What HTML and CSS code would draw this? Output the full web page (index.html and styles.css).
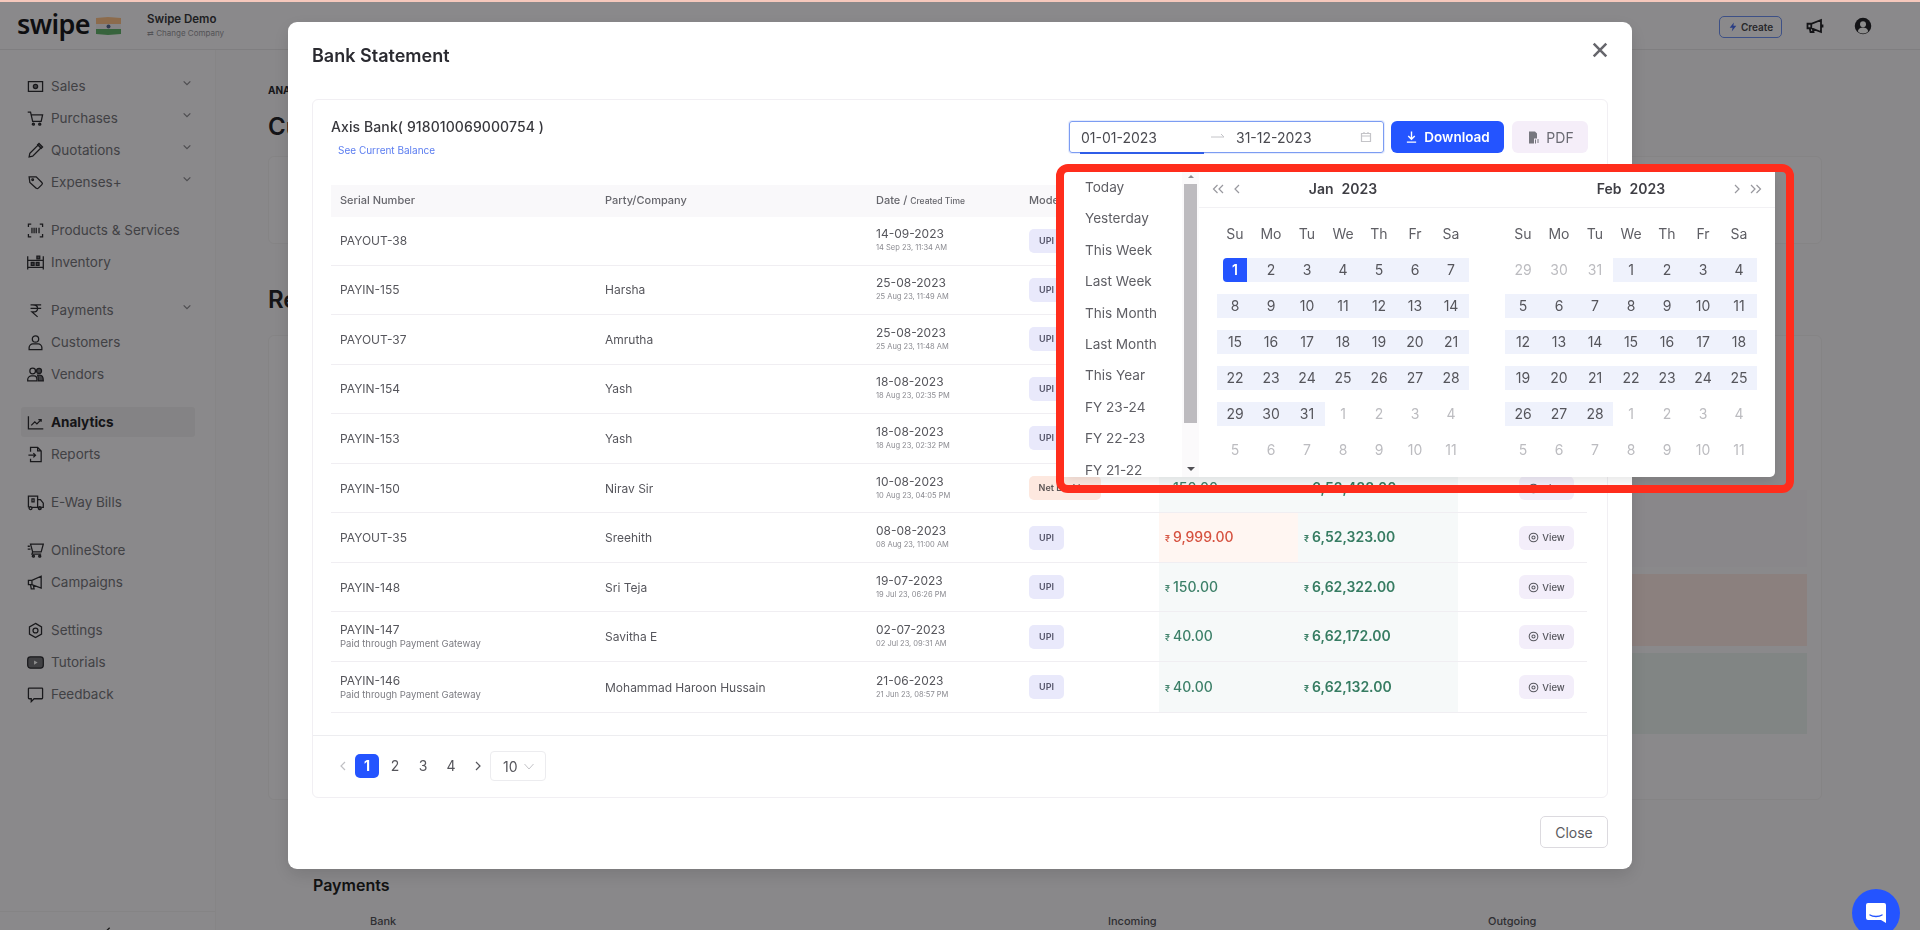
FILE: index.html
```html
<!DOCTYPE html>
<html lang="en">
<head>
<meta charset="utf-8">
<title>Swipe - Bank Statement</title>
<link rel="stylesheet" href="styles.css">
</head>
<body>
<div class="strip"></div>
<div class="app">
  <header class="topbar">
    <div class="brand">
      <span class="logo">swipe</span>
      <svg class="flag" viewBox="0 0 25 18"><path fill="#ffc48a" d="M0 1l12-1 13 1v6H0z"/><path fill="#f4f0f4" d="M0 7h25v5H0z"/><path fill="#64b56d" d="M0 12h25v5l-13 1-12-1z"/><circle cx="12.500" cy="9.500" r="2" fill="#5a6a90"/></svg>
    </div>
    <div class="company">
      <strong>Swipe Demo</strong>
      <small>⇄ Change Company</small>
    </div>
    <div class="top-actions">
      <button class="create"><svg viewBox="0 0 24 24"><path fill="currentColor" d="M14 1L4 14h7l-2 9 11-14h-7z"/></svg>Create</button>
      <svg class="top-icon" viewBox="0 0 24 24" fill="none" stroke="currentColor" stroke-width="2.400"><path d="M2 9v6h5l13 5V4L7 9zM7 9v6M5 15l1 5h4l-1-4M22 10v4"/></svg>
      <svg class="top-icon user" viewBox="0 0 24 24"><circle cx="12" cy="12" r="11" fill="currentColor"/><circle cx="12" cy="9.500" r="4" fill="#fff"/><path fill="#fff" d="M5 19c1-4 4-5 7-5s6 1 7 5c-2 2-4 3-7 3s-5-1-7-3z"/></svg>
    </div>
  </header>
  <div class="shell">
    <aside class="sidebar">
      <nav class="nav">
        <div class="group">
          <a class="item"><svg class="ic" viewBox="0 0 24 24"><path d="M5 5H2v14h3M19 5h3v14h-3M5 5h14M5 19h14"/><circle cx="12" cy="12" r="3" fill="currentColor"/></svg>Sales<svg class="chev" viewBox="0 0 12 12"><path d="M2 4l4 4 4-4"/></svg></a>
          <a class="item"><svg class="ic" viewBox="0 0 24 24"><path d="M1 3h4l3 13h12l2-9H6"/><circle cx="9" cy="20" r="1.500" fill="currentColor"/><circle cx="18" cy="20" r="1.500" fill="currentColor"/></svg>Purchases<svg class="chev" viewBox="0 0 12 12"><path d="M2 4l4 4 4-4"/></svg></a>
          <a class="item"><svg class="ic" viewBox="0 0 24 24"><path d="M3 21l1-5L16 4l4 4L8 20z"/><path fill="currentColor" d="M17 2l5 5-2 2-5-5z"/></svg>Quotations<svg class="chev" viewBox="0 0 12 12"><path d="M2 4l4 4 4-4"/></svg></a>
          <a class="item"><svg class="ic" viewBox="0 0 24 24"><path d="M3 4h10l8 8c1 1 1 2 0 3l-5 5c-1 1-2 1-3 0L4 12z"/><circle cx="8" cy="8" r="1.200"/></svg>Expenses+<svg class="chev" viewBox="0 0 12 12"><path d="M2 4l4 4 4-4"/></svg></a>
        </div>
        <div class="group">
          <a class="item"><svg class="ic" viewBox="0 0 24 24"><path d="M2 7V3h4M18 3h4v4M22 17v4h-4M6 21H2v-4M7 8v8M10 8v8M13 8v8M17 8v8"/></svg>Products &amp; Services</a>
          <a class="item"><svg class="ic" viewBox="0 0 24 24"><path d="M1 3v19M23 3v19M1 9h22M1 19h22"/><path fill="currentColor" d="M6 12h4v4H6zM13 12h4v4h-4zM14 3h4v4h-4z"/></svg>Inventory</a>
        </div>
        <div class="group">
          <a class="item"><svg class="ic" viewBox="0 0 24 24"><path d="M5 4h15M5 9h15M8 4c5 0 7 2 7 5s-3 5-7 5h-1l8 7"/></svg>Payments<svg class="chev" viewBox="0 0 12 12"><path d="M2 4l4 4 4-4"/></svg></a>
          <a class="item"><svg class="ic" viewBox="0 0 24 24"><circle cx="12" cy="7" r="4.500"/><path d="M3 22v-3c0-3 3-5 5-5h8c2 0 5 2 5 5v3z"/></svg>Customers</a>
          <a class="item"><svg class="ic" viewBox="0 0 24 24"><circle cx="8" cy="7" r="4"/><circle cx="17" cy="7" r="3.500" fill="currentColor"/><path d="M1 21v-2c0-3 3-5 5-5h4c2 0 4 2 4 5v2z"/><path fill="currentColor" d="M15 13h3c3 0 5 3 5 8h-7c0-3 0-6-1-8z"/></svg>Vendors</a>
        </div>
        <div class="group">
          <a class="item active"><svg class="ic" viewBox="0 0 24 24"><path d="M2 3v18h21M6 16l5-5 3 3 6-6M16 8h4v3"/></svg>Analytics</a>
          <a class="item"><svg class="ic" viewBox="0 0 24 24"><path d="M5 8V2h10l5 5v15H5v-4M15 2v5h5M2 13h10M9 10l3 3-3 3"/></svg>Reports</a>
        </div>
        <div class="group">
          <a class="item"><svg class="ic" viewBox="0 0 24 24"><path d="M2 19V3h13v16M15 8h4l4 5v6h-3M7 19h9"/><circle cx="5" cy="20" r="2"/><circle cx="18" cy="20" r="2" fill="currentColor"/><path d="M7 7h3v4H7z"/></svg>E-Way Bills</a>
        </div>
        <div class="group">
          <a class="item"><svg class="ic" viewBox="0 0 24 24"><path d="M5 3h18l-3 11H8L5 3zM1 6h3M1 10h4"/><circle cx="9" cy="20" r="1.500" fill="currentColor"/><circle cx="18" cy="20" r="1.500" fill="currentColor"/><path d="M8 14l-1 3h13"/></svg>OnlineStore</a>
          <a class="item"><svg class="ic" viewBox="0 0 24 24"><path d="M2 9v6h5l13 5V3L7 9zM7 9v6M5 15l1 6h4l-1-5"/></svg>Campaigns</a>
        </div>
        <div class="group">
          <a class="item"><svg class="ic" viewBox="0 0 24 24"><path d="M12 2l8.500 5v10L12 22l-8.500-5V7z"/><circle cx="12" cy="12" r="3.500"/></svg>Settings</a>
          <a class="item"><svg class="ic" viewBox="0 0 24 24"><rect x="1" y="4" width="22" height="16" rx="4" fill="currentColor"/><path fill="#fff" stroke="none" d="M10 9l5 3-5 3z"/></svg>Tutorials</a>
          <a class="item"><svg class="ic" viewBox="0 0 24 24"><path d="M3 3h18a1 1 0 011 1v13a1 1 0 01-1 1H10l-4 4v-4H3a1 1 0 01-1-1V4a1 1 0 011-1z"/></svg>Feedback</a>
        </div>
      </nav>
      <div class="side-foot"><svg viewBox="0 0 12 12"><path d="M8 2L4 6l4 4"/></svg></div>
    </aside>
    <main class="main">
      <div class="crumb">ANA</div>
      <h1 class="main-title">Cu</h1>
      <section class="bg-card summary">
        <span class="sum-label">D</span>
        <span class="sum-value">₹</span>
      </section>
      <h2 class="main-title second">Re</h2>
      <section class="bg-card bands">
        <div class="band b1"></div>
        <div class="band b2"></div>
        <div class="band b3"></div>
      </section>
      <section class="pay">
        <h3 class="pay-title">Payments</h3>
        <div class="pay-head"><span class="ph-bank">Bank</span><span class="ph-in">Incoming</span><span class="ph-out">Outgoing</span></div>
      </section>
    </main>
  </div>
</div>

<div class="mask"></div>

<div class="modal">
  <div class="modal-head">
    <h2 class="modal-title">Bank Statement</h2>
    <svg class="modal-x" viewBox="0 0 14 14"><path d="M1.500 1.500l11 11M12.500 1.500l-11 11"/></svg>
  </div>
  <div class="stmt">
    <div class="toolbar">
      <div class="acct">
        <div class="acct-name">Axis Bank( 918010069000754 )</div>
        <a class="acct-link">See Current Balance</a>
      </div>
      <div class="range">
        <span class="range-a">01-01-2023</span>
        <svg class="range-arrow" viewBox="0 0 14 8"><path d="M0 4h13M10 1l3 3"/></svg>
        <span class="range-b">31-12-2023</span>
        <svg class="range-cal" viewBox="0 0 12 12"><path d="M1.500 2.500h9v8h-9zM1.500 5h9M4 1v2M8 1v2"/></svg>
        <i class="range-bar"></i>
      </div>
      <button class="btn-dl"><svg viewBox="0 0 14 14"><path d="M7 1v8M3.500 6L7 9.500 10.500 6M2 12.500h10"/></svg>Download</button>
      <button class="btn-pdf"><svg viewBox="0 0 14 14"><path fill="currentColor" d="M3 1h6l2 2v5H8v5H3z"/><path fill="currentColor" d="M9 9h1v4H9zM11 9h2v1h-2zM11 11h2v1h-2z"/></svg>PDF</button>
    </div>

    <table class="tbl">
      <colgroup><col class="c1"><col class="c2"><col class="c3"><col class="c4"><col class="c5"><col class="c6"><col class="c7"></colgroup>
      <thead>
        <tr><th>Serial Number</th><th>Party/Company</th><th>Date / <small>Created Time</small></th><th>Mode</th><th></th><th></th><th></th></tr>
      </thead>
      <tbody>
        <tr><td>PAYOUT-38</td><td></td><td><div>14-09-2023</div><small>14 Sep 23, 11:34 AM</small></td><td><span class="tag">UPI</span></td><td class="num"></td><td class="num"></td><td class="act"></td></tr>
        <tr><td>PAYIN-155</td><td>Harsha</td><td><div>25-08-2023</div><small>25 Aug 23, 11:49 AM</small></td><td><span class="tag">UPI</span></td><td class="num"></td><td class="num"></td><td class="act"></td></tr>
        <tr><td>PAYOUT-37</td><td>Amrutha</td><td><div>25-08-2023</div><small>25 Aug 23, 11:48 AM</small></td><td><span class="tag">UPI</span></td><td class="num"></td><td class="num"></td><td class="act"></td></tr>
        <tr><td>PAYIN-154</td><td>Yash</td><td><div>18-08-2023</div><small>18 Aug 23, 02:35 PM</small></td><td><span class="tag">UPI</span></td><td class="num"></td><td class="num"></td><td class="act"></td></tr>
        <tr><td>PAYIN-153</td><td>Yash</td><td><div>18-08-2023</div><small>18 Aug 23, 02:32 PM</small></td><td><span class="tag">UPI</span></td><td class="num"></td><td class="num"></td><td class="act"></td></tr>
        <tr><td>PAYIN-150</td><td>Nirav Sir</td><td><div>10-08-2023</div><small>10 Aug 23, 04:05 PM</small></td><td><span class="tag net">Net Banking</span></td><td class="num"><span class="amt in"><i>₹</i>150.00</span></td><td class="num"><span class="amt bal"><i>₹</i>6,52,488.00</span></td><td class="act"><span class="view"><svg viewBox="0 0 14 14"><circle cx="7" cy="7" r="5.500"/><circle cx="7" cy="7" r="2"/></svg>View</span></td></tr>
        <tr><td>PAYOUT-35</td><td>Sreehith</td><td><div>08-08-2023</div><small>08 Aug 23, 11:00 AM</small></td><td><span class="tag">UPI</span></td><td class="num out"><span class="amt red"><i>₹</i>9,999.00</span></td><td class="num"><span class="amt bal"><i>₹</i>6,52,323.00</span></td><td class="act"><span class="view"><svg viewBox="0 0 14 14"><circle cx="7" cy="7" r="5.500"/><circle cx="7" cy="7" r="2"/></svg>View</span></td></tr>
        <tr><td>PAYIN-148</td><td>Sri Teja</td><td><div>19-07-2023</div><small>19 Jul 23, 06:26 PM</small></td><td><span class="tag">UPI</span></td><td class="num"><span class="amt in"><i>₹</i>150.00</span></td><td class="num"><span class="amt bal"><i>₹</i>6,62,322.00</span></td><td class="act"><span class="view"><svg viewBox="0 0 14 14"><circle cx="7" cy="7" r="5.500"/><circle cx="7" cy="7" r="2"/></svg>View</span></td></tr>
        <tr><td><div>PAYIN-147</div><small class="paid">Paid through Payment Gateway</small></td><td>Savitha E</td><td><div>02-07-2023</div><small>02 Jul 23, 09:31 AM</small></td><td><span class="tag">UPI</span></td><td class="num"><span class="amt in"><i>₹</i>40.00</span></td><td class="num"><span class="amt bal"><i>₹</i>6,62,172.00</span></td><td class="act"><span class="view"><svg viewBox="0 0 14 14"><circle cx="7" cy="7" r="5.500"/><circle cx="7" cy="7" r="2"/></svg>View</span></td></tr>
        <tr><td><div>PAYIN-146</div><small class="paid">Paid through Payment Gateway</small></td><td>Mohammad Haroon Hussain</td><td><div>21-06-2023</div><small>21 Jun 23, 08:57 PM</small></td><td><span class="tag">UPI</span></td><td class="num"><span class="amt in"><i>₹</i>40.00</span></td><td class="num"><span class="amt bal"><i>₹</i>6,62,132.00</span></td><td class="act"><span class="view"><svg viewBox="0 0 14 14"><circle cx="7" cy="7" r="5.500"/><circle cx="7" cy="7" r="2"/></svg>View</span></td></tr>
      </tbody>
    </table>

    <div class="pager">
      <svg class="pg-arrow dim" viewBox="0 0 10 12"><path d="M7 2L3 6l4 4"/></svg>
      <span class="pg cur">1</span><span class="pg">2</span><span class="pg">3</span><span class="pg">4</span>
      <svg class="pg-arrow" viewBox="0 0 10 12"><path d="M3 2l4 4-4 4"/></svg>
      <span class="pg-size">10<svg viewBox="0 0 12 12"><path d="M1.500 4L6 9l4.500-5"/></svg></span>
    </div>
  </div>
  <div class="modal-foot"><button class="btn-close">Close</button></div>
</div>

<div class="picker">
  <div class="presets">
    <ul class="preset-list">
      <li>Today</li><li>Yesterday</li><li>This Week</li><li>Last Week</li><li>This Month</li><li>Last Month</li><li>This Year</li><li>FY 23-24</li><li>FY 22-23</li><li>FY 21-22</li>
    </ul>
    <div class="sbar">
      <i class="sb-up"></i>
      <i class="sb-thumb"></i>
      <i class="sb-down"></i>
    </div>
  </div>
  <div class="panel">
    <div class="cal-head">
      <span class="cal-nav left">
        <svg viewBox="0 0 14 12"><path d="M6.500 2l-4 4 4 4M12 2L8 6l4 4"/></svg>
        <svg viewBox="0 0 8 12"><path d="M6 2L2 6l4 4"/></svg>
      </span>
      <span class="cal-title"><b>Jan</b><b>2023</b></span>
    </div>
    <div class="cal-grid">
      <span class="wd">Su</span><span class="wd">Mo</span><span class="wd">Tu</span><span class="wd">We</span><span class="wd">Th</span><span class="wd">Fr</span><span class="wd">Sa</span>
      <span class="d start"><b>1</b></span><span class="d">2</span><span class="d">3</span><span class="d">4</span><span class="d">5</span><span class="d">6</span><span class="d">7</span>
      <span class="d">8</span><span class="d">9</span><span class="d">10</span><span class="d">11</span><span class="d">12</span><span class="d">13</span><span class="d">14</span>
      <span class="d">15</span><span class="d">16</span><span class="d">17</span><span class="d">18</span><span class="d">19</span><span class="d">20</span><span class="d">21</span>
      <span class="d">22</span><span class="d">23</span><span class="d">24</span><span class="d">25</span><span class="d">26</span><span class="d">27</span><span class="d">28</span>
      <span class="d">29</span><span class="d">30</span><span class="d">31</span><span class="o">1</span><span class="o">2</span><span class="o">3</span><span class="o">4</span>
      <span class="o">5</span><span class="o">6</span><span class="o">7</span><span class="o">8</span><span class="o">9</span><span class="o">10</span><span class="o">11</span>
    </div>
  </div>
  <div class="panel">
    <div class="cal-head">
      <span class="cal-title"><b>Feb</b><b>2023</b></span>
      <span class="cal-nav right">
        <svg viewBox="0 0 8 12"><path d="M2 2l4 4-4 4"/></svg>
        <svg viewBox="0 0 14 12"><path d="M2 2l4 4-4 4M7.500 2l4 4-4 4"/></svg>
      </span>
    </div>
    <div class="cal-grid">
      <span class="wd">Su</span><span class="wd">Mo</span><span class="wd">Tu</span><span class="wd">We</span><span class="wd">Th</span><span class="wd">Fr</span><span class="wd">Sa</span>
      <span class="o">29</span><span class="o">30</span><span class="o">31</span><span class="d">1</span><span class="d">2</span><span class="d">3</span><span class="d">4</span>
      <span class="d">5</span><span class="d">6</span><span class="d">7</span><span class="d">8</span><span class="d">9</span><span class="d">10</span><span class="d">11</span>
      <span class="d">12</span><span class="d">13</span><span class="d">14</span><span class="d">15</span><span class="d">16</span><span class="d">17</span><span class="d">18</span>
      <span class="d">19</span><span class="d">20</span><span class="d">21</span><span class="d">22</span><span class="d">23</span><span class="d">24</span><span class="d">25</span>
      <span class="d">26</span><span class="d">27</span><span class="d">28</span><span class="o">1</span><span class="o">2</span><span class="o">3</span><span class="o">4</span>
      <span class="o">5</span><span class="o">6</span><span class="o">7</span><span class="o">8</span><span class="o">9</span><span class="o">10</span><span class="o">11</span>
    </div>
  </div>
</div>

<div class="annotation"></div>

<div class="chat"><svg viewBox="0 0 24 24"><path fill="#fff" d="M4 2h16a2 2 0 012 2v18l-5-3H4a2 2 0 01-2-2V4a2 2 0 012-2z"/><path fill="none" stroke="#2454ff" stroke-width="1.400" stroke-linecap="round" d="M6 14c3 2 9 2 12 0"/></svg></div>
</body>
</html>
```
FILE: styles.css
```css
* { box-sizing: border-box; }
html, body { margin: 0; height: 930px; overflow: hidden; }
body { font-family: Inter, "Liberation Sans", sans-serif; color: #4a4a50; background: #fcfafd; font-size: 12px; }
svg { display: block; }
button { font-family: inherit; cursor: pointer; }
h1, h2, h3, ul { margin: 0; padding: 0; }

.strip { height: 2px; background: #f6c8bc; }
.app { height: 928px; display: flex; flex-direction: column; }

/* top bar */
.topbar { height: 48px; flex: none; display: flex; align-items: center; border-bottom: 1px solid #e8e6e9; }
.brand { width: 147px; padding-left: 17px; display: flex; align-items: center; gap: 6px; flex: none; }
.logo { font-family: "Noto Sans", sans-serif; font-weight: 600; font-size: 27px; letter-spacing: -0.6px; line-height: 1; color: #1b1b1f; position: relative; top: -2px; }
.flag { width: 25px; height: 18px; margin-top: 1px; }
.company { display: flex; flex-direction: column; gap: 2px; margin-top: -2px; }
.company strong { font-size: 11.500px; font-weight: 600; color: #3a3a40; line-height: 14px; }
.company small { font-size: 8px; color: #98989e; line-height: 10px; }
.top-actions { margin-left: auto; display: flex; align-items: center; padding-right: 48px; color: #25252a; margin-top: 2px; }
.create { width: 63px; height: 22px; background: transparent; border: 1.500px solid #6f92f5; border-radius: 5px; display: flex; align-items: center; justify-content: center; gap: 3px; font-size: 10px; font-weight: 600; color: #4a4a50; padding: 0; }
.create svg { width: 10px; height: 12px; color: #4d70f0; }
.top-icon { width: 18px; height: 18px; margin-left: 24px; margin-top: -2px; }
.top-icon.user { margin-left: 30px; }

/* sidebar */
.shell { flex: 1; display: flex; min-height: 0; }
.sidebar { width: 216px; flex: none; border-right: 1px solid #f4f2f5; padding-top: 20px; display: flex; flex-direction: column; }
.nav { flex: 1; display: flex; flex-direction: column; gap: 16px; }
.group { display: flex; flex-direction: column; }
.item { height: 32px; display: flex; align-items: center; position: relative; margin: 0 20px 0 21px; padding-left: 6px; font-size: 13.500px; color: #77777d; }
.item.active { color: #27272c; font-weight: 700; background: #f1eff2; border-radius: 3px; height: 30px; margin-top: 1px; margin-bottom: 1px; }
.ic { width: 17px; height: 17px; margin-right: 7px; flex: none; fill: none; stroke: #2e2e33; stroke-width: 1.800; }
.chev { position: absolute; left: 161px; top: 8px; width: 10px; height: 10px; fill: none; stroke: #8e8e94; stroke-width: 1.500; }
.side-foot { height: 19px; border-top: 1px solid #f2f0f3; display: flex; justify-content: center; padding-top: 14px; }
.side-foot svg { width: 10px; height: 10px; fill: none; stroke: #333; stroke-width: 1.600; }

/* page behind the modal */
.main { flex: 1; padding: 33px 98px 0 52px; background: #faf8fb; display: flex; flex-direction: column; min-width: 0; }
.main > * { flex: none; }
.crumb { font-size: 10px; font-weight: 700; color: #2b2b30; line-height: 14px; }
.main-title { font-size: 24px; font-weight: 600; color: #26262b; line-height: 30px; margin-top: 15px; }
.bg-card { background: #fcfafd; border: 1px solid #f2f0f3; border-radius: 6px; }
.summary { height: 88px; margin-top: 14px; padding: 20px 28px; display: flex; flex-direction: column; gap: 10px; }
.sum-label { font-size: 11px; color: #3d8f70; }
.sum-value { font-size: 14px; font-weight: 700; color: #222; }
.second { margin-top: 41px; }
.bands { margin-top: 20px; height: 465px; padding: 154px 14px 0 1230px; display: flex; flex-direction: column; gap: 7px; }
.band { flex: none; }
.b1 { height: 77px; background: #f9f6fc; }
.b2 { height: 72px; background: #fde9e5; }
.b3 { height: 81px; background: #ebf3f0; }
.pay { margin-top: 60px; padding: 13px 0 0 45px; }
.pay-title { font-size: 16px; font-weight: 600; color: #222; line-height: 24px; }
.pay-head { display: flex; font-size: 11px; font-weight: 500; color: #55555b; margin-top: 17px; }
.ph-bank { width: 795px; padding-left: 57px; }
.ph-in { width: 380px; }

/* overlay */
.mask { position: fixed; inset: 2px 0 0 0; background: rgba(0, 0, 0, .45); }

/* modal */
.modal { position: fixed; left: 288px; top: 22px; width: 1344px; height: 847px; background: #fff; border-radius: 9px; display: flex; flex-direction: column; padding: 0 24px 21px 24px; box-shadow: 0 6px 18px rgba(0, 0, 0, .12); }
.modal-head { height: 77px; flex: none; display: flex; justify-content: space-between; padding-top: 23px; }
.modal-title { font-size: 18px; font-weight: 600; color: #2a2a30; line-height: 22px; }
.modal-x { width: 16px; height: 16px; margin-top: -3px; margin-right: 0; fill: none; stroke: #66666c; stroke-width: 2.200; }
.stmt { height: 699px; flex: none; border: 1px solid #f1eff3; border-radius: 6px; padding: 0 19px 0 18px; display: flex; flex-direction: column; }
.modal-foot { margin-top: auto; display: flex; justify-content: flex-end; }
.btn-close { width: 68px; height: 32px; background: #fff; border: 1px solid #dcdadf; border-radius: 5px; font-size: 14px; color: #5b5b60; padding: 0; }

.toolbar { height: 85px; flex: none; display: flex; padding-top: 21px; }
.acct { flex: 1; margin-top: -4px; }
.acct-name { font-size: 14px; letter-spacing: .1px; font-weight: 500; color: #38383d; line-height: 18px; padding-top: 1px; }
.acct-link { display: block; font-size: 10px; color: #5a7cf0; line-height: 12px; margin: 8px 0 0 7px; }
.range { width: 315px; height: 32px; border: 1.500px solid #7c9cf2; border-radius: 3px; display: flex; align-items: center; position: relative; font-size: 14px; color: #4a4a50; box-shadow: 0 0 0 1px #e6ecfd; }
.range-a { margin-left: 11px; width: 130px; }
.range-arrow { width: 14px; height: 8px; fill: none; stroke: #c4c4c8; stroke-width: 1; margin: 0 10px 0 0; }
.range-b { width: 122px; margin-left: 1px; }
.range-cal { width: 12px; height: 12px; fill: none; stroke: #c4c4c8; stroke-width: 1.200; margin-left: 2px; }
.range-bar { position: absolute; left: 10px; bottom: -1.500px; width: 124px; height: 2px; background: #2f5de8; }
.btn-dl { width: 113px; height: 32px; margin-left: 7px; background: #2454ff; border: 0; border-radius: 6px; color: #fff; font-size: 13.500px; font-weight: 600; display: flex; align-items: center; justify-content: center; gap: 6px; padding: 0; }
.btn-dl svg { width: 13px; height: 14px; fill: none; stroke: #fff; stroke-width: 1.500; }
.btn-pdf { width: 76px; height: 32px; margin-left: 8px; background: #f5eef9; border: 0; border-radius: 6px; color: #6a6a72; font-size: 14px; display: flex; align-items: center; justify-content: center; gap: 6px; padding: 0; }
.btn-pdf svg { width: 14px; height: 15px; color: #77777f; }

/* table */
.tbl { width: 1256px; border-collapse: collapse; table-layout: fixed; flex: none; }
.c1 { width: 265px; } .c2 { width: 271px; } .c3 { width: 152px; } .c4 { width: 140px; } .c5 { width: 139px; } .c6 { width: 160px; } .c7 { width: 129px; }
.tbl th { height: 32px; background: #f9f8fa; font-size: 11px; font-weight: 500; color: #66666c; text-align: left; padding: 0 0 2px 9px; }
.tbl th:nth-child(4) { padding-left: 10px; }
.tbl th small { font-size: 8.500px; }
.tbl td { height: 49.570px; border-bottom: 1px solid #f0eef2; padding: 0 0 0 9px; font-size: 12px; color: #56565c; line-height: 15px; }
.tbl tbody tr:first-child td { height: 48px; }
.tbl tbody tr:nth-child(9) td { height: 50px; }
.tbl tbody tr:nth-child(10) td { height: 51px; }
.tbl td small { display: block; font-size: 7.500px; color: #8a8a90; line-height: 14px; }
.tbl td small.paid { font-size: 9.500px; color: #7c7c82; line-height: 14px; }
.tbl td.num { background: #f6f9f9; padding-left: 6px; }
.tbl td.num.out { background: #fff6f2; }
.tbl td.act { text-align: right; padding: 0 13px 0 0; }
.tbl td:nth-child(4) { padding-left: 10px; }
.tag { display: inline-block; height: 24px; width: 35px; background: #e9e9fb; border-radius: 5px; font-size: 9px; font-weight: 600; color: #55556a; line-height: 24px; text-align: center; }
.tag.net { width: 72px; background: #fde8df; color: #5c5555; }
.amt { font-size: 14px; font-weight: 500; }
.amt i { font-style: normal; font-size: 9px; margin-right: 3px; }
.amt.in { color: #3d8069; }
.amt.red { color: #d6513f; }
.amt.bal { color: #367c62; font-weight: 600; }
.view { display: inline-flex; align-items: center; justify-content: center; gap: 3px; width: 55px; height: 24px; background: #f3eefa; border-radius: 6px; font-size: 9.500px; font-weight: 500; color: #55555c; }
.view svg { width: 11px; height: 11px; fill: none; stroke: #55555c; stroke-width: 1.300; }

/* pager */
.pager { margin: 22px -19px 0 -18px; border-top: 1px solid #ededf0; padding: 15px 0 0 25px; display: flex; align-items: flex-start; }
.pg-arrow { width: 10px; height: 12px; margin-top: 9px; fill: none; stroke: #55555b; stroke-width: 1.200; }
.pg-arrow.dim { stroke: #c0c0c4; margin-right: 7px; }
.pg { width: 24px; height: 24px; margin: 3px 4px 0 0; font-size: 14px; color: #55555b; text-align: center; line-height: 24px; }
.pg.cur { background: #2454ff; color: #fff; font-weight: 700; border-radius: 5px; }
.pg-arrow:not(.dim) { margin-left: 6px; margin-right: 7px; }
.pg-size { width: 56px; height: 30px; border: 1px solid #ececef; border-radius: 4px; display: flex; align-items: center; font-size: 14px; color: #55555b; padding-left: 12px; gap: 5px; }
.pg-size svg { width: 12px; height: 12px; fill: none; stroke: #c4c4c8; stroke-width: 1; }

/* date range popup */
.picker { position: fixed; left: 1064px; top: 172px; width: 711px; height: 305px; background: #fff; border-bottom-right-radius: 5px; display: flex; box-shadow: 0 4px 12px rgba(0, 0, 0, .1); }
.presets { width: 135px; flex: none; display: flex; overflow: hidden; }
.preset-list { flex: 1; list-style: none; padding-left: 21px; }
.preset-list li { height: 31.400px; line-height: 30px; font-size: 13.600px; color: #5e5e64; white-space: nowrap; }
.sbar { width: 17px; flex: none; display: flex; flex-direction: column; align-items: center; position: relative; background: #fbfafb; }
.sb-up { width: 0; height: 0; border: 3.500px solid transparent; border-top: 0; border-bottom-color: #8c8c90; margin-top: 3px; }
.sb-thumb { width: 13px; height: 239px; background: #bdbbbf; margin-top: 6px; }
.sb-down { width: 0; height: 0; border: 4px solid transparent; border-bottom: 0; border-top-color: #505055; position: absolute; top: 295px; }
.panel { width: 288px; flex: none; display: flex; flex-direction: column; }
.cal-head { height: 36px; flex: none; border-bottom: 1px solid #f2f1f4; display: flex; align-items: center; justify-content: center; position: relative; padding-bottom: 3px; }
.cal-title { display: flex; gap: 8px; font-size: 14px; color: #3e3e44; }
.cal-title b { font-weight: 600; }
.cal-nav { position: absolute; top: 11px; display: flex; align-items: center; gap: 8px; }
.cal-nav.left { left: 12px; }
.cal-nav.right { right: 12px; }
.cal-nav svg { height: 12px; fill: none; stroke: #98989e; stroke-width: 1.200; }
.cal-nav svg[viewBox^="0 0 14"] { width: 14px; }
.cal-nav svg[viewBox^="0 0 8"] { width: 8px; }
.cal-grid { display: grid; grid-template-columns: repeat(7, 36px); grid-auto-rows: 36px; padding: 8px 18px; font-size: 14px; text-align: center; }
.wd { line-height: 36px; color: #5e5e64; }
.d { height: 24px; margin: 6px 0; line-height: 24px; background: #eff2fc; color: #55555b; }
.o { line-height: 36px; color: #bcbcc0; }
.d.start { background: linear-gradient(90deg, transparent 50%, #eff2fc 50%); }
.d.start b { display: block; width: 24px; height: 24px; margin-left: 6px; background: #2454ff; color: #fff; border-radius: 4px 0 0 4px; font-weight: 600; }

/* screenshot annotation */
.annotation { position: fixed; left: 1056px; top: 164px; width: 738px; height: 329px; border: 8px solid #ff2d1c; border-radius: 12px; pointer-events: none; }

.chat { position: fixed; left: 1852px; top: 889px; width: 48px; height: 48px; border-radius: 50%; background: #2454ff; display: flex; align-items: center; justify-content: center; }
.chat svg { width: 24px; height: 26px; }
```
